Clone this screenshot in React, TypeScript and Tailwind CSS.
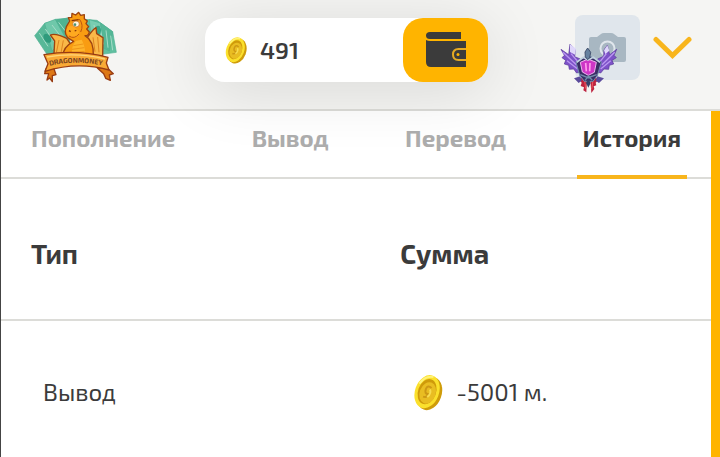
const tabs = ['Пополнение', 'Вывод', 'Перевод', 'История'];

const rows = [{ type: 'Вывод', amount: '-5001 м.' }];

const Logo = () => {
  return (
    <svg className="h-[75px] w-[87px]" viewBox="87 27 261 225">
      <g stroke="#4fb092" strokeWidth="2" strokeLinejoin="round">
        <path d="M98 104 128 67 200 50 205 150 135 160Z" fill="#58b898" />
        <path d="M128 67 160 55 190 110 150 150Z" fill="#6fc8aa" />
        <path d="M160 55 195 52 200 120Z" fill="#4fb392" />
        <path d="M245 55 285 58 332 92 343 154 300 160 240 140Z" fill="#5fbf9f" />
        <path d="M262 56 296 66 302 150 268 120Z" fill="#79cdb1" />
        <path d="M296 66 332 92 322 150 302 140Z" fill="#54b796" />
      </g>
      <g stroke="#a5dcc7" strokeWidth="3" fill="none">
        <path d="M112 96 138 136M130 84 158 124M150 72 176 106M170 64 190 90" />
        <path d="M276 72 284 116M294 78 304 130M312 88 318 140M326 104 332 148" />
      </g>
      <ellipse cx="136" cy="112" rx="10" ry="15" fill="#2f9b7c" transform="rotate(-35 136 112)" />
      <ellipse cx="288" cy="88" rx="9" ry="14" fill="#37a485" />
      <g stroke="#9d4310" strokeWidth="4" strokeLinejoin="round">
        <path d="M194 112Q160 95 145 102L158 120 156 158 205 164 206 130Z" fill="#f9b848" />
        <path d="M254 112Q275 82 282 80L284 98 303 110 302 164 240 164Z" fill="#f9b848" />
        <path d="M205 115Q183 103 193 77L203 60 199 50 209 49 210 37 221 42 230 34 236 43 247 41 247 53 256 60 252 68 260 77 254 84 262 93Q260 105 249 104 276 119 274 165L184 165Q181 139 215 121Z" fill="#f99c12" />
      </g>
      <path d="M171 117 163 155M184 118 177 156M287 108 291 154M273 109 279 152" stroke="#de8420" strokeWidth="3" />
      <path d="M221 120Q204 143 212 163L249 163Q251 137 239 116Z" fill="#ffb52b" />
      <path d="M214 134 244 129M210 145 247 140M210 155 248 151" stroke="#ee9519" strokeWidth="3" />
      <path d="M202 76Q190 85 195 97 201 111 219 110 232 108 231 91 219 82 217 75Z" fill="#ffa91f" />
      <path d="M201 105Q217 116 231 99M232 54Q246 72 236 93" stroke="#bd5611" strokeWidth="3" fill="none" />
      <ellipse cx="222" cy="69" rx="10" ry="9" fill="#fff6dd" stroke="#bd6321" strokeWidth="2" />
      <circle cx="219" cy="71" r="4" fill="#4b9277" />
      <path d="M209 59 230 56M201 89 206 92M218 90 223 88" stroke="#833308" strokeWidth="4" />
      <g stroke="#983b12" strokeWidth="4" strokeLinejoin="round">
        <path d="M132 204 154 198 162 221 151 224 151 242 143 231 135 237 140 218 128 218Z" fill="#de7815" />
        <path d="M286 201 315 200 334 218 322 222 325 238 311 232 305 218Z" fill="#de7815" />
        <path d="M126 161Q224 144 318 169L313 186 321 207Q226 180 129 211L138 188Z" fill="#f9aa36" />
      </g>
      <path d="M135 168Q224 153 309 174" stroke="#ffd678" strokeWidth="4" fill="none" />
      <path id="ribbon" d="M143 194Q224 175 312 196" fill="none" />
      <text className="font-['Exo_2','Open_Sans',sans-serif] text-[21px] font-bold" fill="#7a4320">
        <textPath href="#ribbon">DRAGONMONEY</textPath>
      </text>
    </svg>
  );
};

const Coin = ({ className }: { className: string }) => {
  return (
    <svg className={className} viewBox="0 0 32 40">
      <g transform="rotate(20 16 20)">
        <ellipse cx="18" cy="21" rx="12" ry="17" fill="#cf9c0a" />
        <ellipse cx="15" cy="20" rx="12" ry="17" fill="#fbe02c" />
        <ellipse cx="15" cy="20" rx="9" ry="13" fill="#cf9a0a" />
        <ellipse cx="16" cy="21" rx="8" ry="11" fill="#e9bd22" />
        <path d="M18 15Q13 13 13 18T17 22Q17 26 13 26" fill="none" stroke="#cd9815" strokeWidth="2" />
        <path d="M17 17Q20 20 17 25" fill="none" stroke="#f8dc52" strokeWidth="2" />
        <path d="M5 15Q8 5 16 4" fill="none" stroke="#fff278" strokeWidth="2" />
      </g>
    </svg>
  );
};

const WalletIcon = () => {
  return (
    <svg className="h-9 w-10" viewBox="0 0 40 36">
      <path d="M4 0H35V7H4Q0 7 0 3.5T4 0Z" fill="#3b3b3b" />
      <path d="M0 8Q2 9 4 9H40V35H5Q0 35 0 30Z" fill="#3b3b3b" />
      <path d="M40 17H32.5Q27 17 27 22.5T32.5 28H40" fill="none" stroke="#e5aa24" strokeWidth="2" />
      <circle cx="32" cy="22.5" r="1.5" fill="#ffb400" />
    </svg>
  );
};

const RankBadge = () => {
  return (
    <svg className="absolute top-[27px] -left-4 h-[53px] w-[60px]" viewBox="39 126 180 159">
      <g strokeLinejoin="round" strokeWidth="2">
        <path d="M45 148 68 164 72 132 88 148 86 170 103 177 108 214 92 219 83 207 70 208 68 196 55 192 59 181 48 173 55 166Z" fill="#7d52c8" stroke="#533095" />
        <path d="M212 148 191 164 184 136 174 150 173 169 155 177 149 214 164 219 174 207 188 208 190 196 203 192 198 181 211 173 204 166Z" fill="#7d52c8" stroke="#533095" />
      </g>
      <path d="M51 157 91 194M63 182 95 207M75 161 100 190" stroke="#bb98f1" strokeWidth="4" />
      <path d="M206 157 168 194M194 182 164 207M181 161 158 190" stroke="#bb98f1" strokeWidth="4" />
      <path d="M72 132 90 146 87 164 72 156ZM184 136 174 151 178 162 190 152Z" fill="#e0d8fb" />
      <path d="M109 230 123 240 121 277 112 271 114 262 104 258 107 248 100 240ZM147 230 133 240 136 279 145 267 143 259 151 256 149 248 157 240Z" fill="#bd233f" />
      <path d="M116 242 119 266M141 242 137 268" stroke="#f05a5e" strokeWidth="3" />
      <path d="M84 235 103 229 107 242 98 249ZM174 235 154 229 149 242 159 249Z" fill="#5b4b9b" />
      <path d="M101 226 90 186 126 166 166 186 154 227 141 244H115Z" fill="#3a2e65" stroke="#708eae" strokeWidth="3" />
      <path d="M103 187 126 177 151 187 145 217 127 226 109 216Z" fill="#ce36c6" stroke="#edb5ee" strokeWidth="3" />
      <path d="M119 189 121 214M132 189 131 214" stroke="#ff9bed" strokeWidth="5" />
      <path d="M92 187 112 172 126 180 142 172 162 187" fill="none" stroke="#c1d1df" strokeWidth="5" />
      <path d="M125 144 134 157 131 173 125 179 118 170 117 156Z" fill="#65819f" stroke="#41506d" strokeWidth="3" />
      <path d="M103 224 126 233 152 224M117 241 127 229 139 241" fill="none" stroke="#718fab" strokeWidth="4" />
      <path d="M127 237 134 249 127 263 120 249Z" fill="#354369" />
    </svg>
  );
};

const Header = () => {
  return (
    <header className="flex items-center justify-between border-b-2 border-[#dcdcd8] bg-[#f5f5f3] pt-[10px] pr-7 pb-6 pl-[30px]">
      <a href="/" aria-label="DragonMoney">
        <Logo />
      </a>
      <div className="mt-1 flex h-16 w-[283px] items-center justify-between rounded-[20px] bg-white shadow-[0_8px_64px_rgba(0,0,0,0.12)]">
        <div className="flex items-center gap-3 pl-[19px]">
          <Coin className="h-[30px] w-6" />
          <span className="text-[24px] font-semibold">491</span>
        </div>
        <button
          type="button"
          aria-label="Кошелёк"
          className="flex h-16 w-[85px] items-center justify-center rounded-[20px] bg-[#ffb400]"
        >
          <WalletIcon />
        </button>
      </div>
      <button type="button" aria-label="Профиль" className="flex items-center gap-3">
        <span className="relative flex size-[65px] items-center justify-center rounded-lg bg-[#e0e6ec]">
          <svg className="h-[29px] w-[37px]" viewBox="0 0 37 29">
            <path d="M2 4H8L12 1Q13 0 15 0H22Q24 0 25 1L29 4H35Q37 4 37 6V27Q37 29 35 29H2Q0 29 0 27V6Q0 4 2 4Z" fill="#a8b7c2" />
            <circle cx="18.500" cy="15.500" r="7" fill="none" stroke="#e0e6ec" strokeWidth="2" />
          </svg>
          <RankBadge />
        </span>
        <svg className="h-6 w-10" viewBox="0 0 40 24">
          <path d="M4 3.500 20.500 19.500 37 3.500" fill="none" stroke="#f8b51c" strokeWidth="5" strokeLinecap="round" />
        </svg>
      </button>
    </header>
  );
};

const Tabs = () => {
  return (
    <nav className="flex justify-between border-b-2 border-[#dcdcd8] px-6">
      {tabs.map((tab) => (
        <a
          key={tab}
          href="#"
          className={
            tab === 'История'
              ? '-mb-0.5 border-b-4 border-[#f8b51c] px-1.5 pt-3 pb-[22px] text-[24px] leading-[30px] font-bold'
              : '-mb-0.5 border-b-4 border-transparent px-1.5 pt-3 pb-[22px] text-[24px] leading-[30px] font-bold text-[#acacac]'
          }
        >
          {tab}
        </a>
      ))}
    </nav>
  );
};

const HistoryTable = () => {
  return (
    <table className="w-full text-left">
      <thead>
        <tr className="h-[141px] border-b-2 border-[#dcdcd8] text-[27px]">
          <th className="w-[52%] px-[30px] pt-2 font-bold">Тип</th>
          <th className="px-[30px] pt-2 font-bold">Сумма</th>
        </tr>
      </thead>
      <tbody>
        {rows.map((row) => (
          <tr key={row.amount} className="h-[142px] text-[24px]">
            <td className="px-[42px]">{row.type}</td>
            <td className="px-[42px]">
              <div className="flex items-center gap-3">
                <Coin className="h-10 w-8" />
                {row.amount}
              </div>
            </td>
          </tr>
        ))}
      </tbody>
    </table>
  );
};

const App = () => {
  return (
    <div className="min-h-screen border-l border-[#444444] bg-white font-['Exo_2','Open_Sans',sans-serif] text-[#3b3b3b]">
      <Header />
      <main className="min-h-[346px] border-r-[9px] border-[#ffb400]">
        <Tabs />
        <HistoryTable />
      </main>
    </div>
  );
};

export default App;
